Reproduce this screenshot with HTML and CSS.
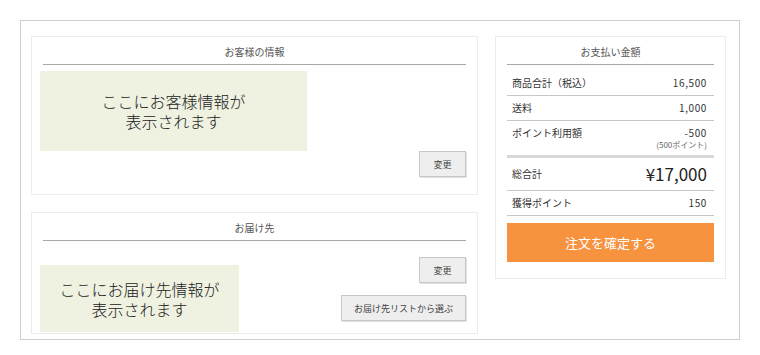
FILE: index.html
```html
<!DOCTYPE html>
<html lang="ja">
<head>
    <meta charset="UTF-8">
    <title>ご注文内容の確認</title>
    <link rel="stylesheet" href="styles.css">
</head>
<body>

    <div class="frame">
        <!-- 左側 -->
        <div class="left-col">
            <div class="card card-customer">
                <div class="card-title">お客様の情報</div>
                <div class="placeholder placeholder-customer">ここにお客様情報が<br>表示されます</div>
                <div class="btn-row">
                    <button class="btn btn-small">変更</button>
                </div>
            </div>

            <div class="card card-delivery">
                <div class="card-title">お届け先</div>
                <div class="delivery-body">
                    <div class="placeholder placeholder-delivery">ここにお届け先情報が<br>表示されます</div>
                    <div class="delivery-btns">
                        <button class="btn btn-small">変更</button>
                        <button class="btn btn-list">お届け先リストから選ぶ</button>
                    </div>
                </div>
            </div>
        </div>

        <!-- 右側 -->
        <div class="card card-payment">
            <div class="card-title">お支払い金額</div>
            <div class="pay-row first">
                <span>商品合計（税込）</span>
                <span class="num">16,500</span>
            </div>
            <div class="pay-row">
                <span>送料</span>
                <span class="num">1,000</span>
            </div>
            <div class="pay-row points">
                <span>ポイント利用額</span>
                <span class="num-wrap">
                    <span class="num">-500</span>
                    <span class="sub">(500ポイント)</span>
                </span>
            </div>
            <div class="pay-row total">
                <span>総合計</span>
                <span class="total-num">¥17,000</span>
            </div>
            <div class="pay-row">
                <span>獲得ポイント</span>
                <span class="num">150</span>
            </div>
            <button class="btn-order">注文を確定する</button>
        </div>
    </div>

</body>
</html>
```

FILE: styles.css
```css
body {
    margin: 0;
    padding: 0;
    background-color: #fff;
    color: #333;
    font-family: "Noto Sans CJK JP", "Noto Sans", sans-serif;
}

.frame {
    box-sizing: border-box;
    width: 720px;
    height: 320px;
    margin: 20px 0 0 20px;
    padding: 15px 10px;
    border: 1px solid #cfcfcf;
    display: flex;
    gap: 17px;
    align-items: flex-start;
}

.left-col {
    width: 447px;
    display: flex;
    flex-direction: column;
    gap: 17px;
}

.card {
    box-sizing: border-box;
    border: 1px solid #ececec;
    padding: 0 11px;
}

.card-title {
    font-size: 10px;
    line-height: 12px;
    color: #555;
    text-align: center;
    padding: 9px 0 6px;
    border-bottom: 1px solid #a8a8a8;
}

/* 仮の表示エリア */
.placeholder {
    background-color: #eff2e1;
    font-size: 16px;
    line-height: 20px;
    font-weight: 300;
    color: #222;
    text-align: center;
    display: flex;
    align-items: center;
    justify-content: center;
    margin-left: -3px;
}

.placeholder-customer {
    width: 267px;
    height: 80px;
    margin-top: 6px;
}

.placeholder-delivery {
    width: 199px;
    height: 67px;
    margin-top: 24px;
}

.card-customer {
    padding-bottom: 17px;
}

.btn-row {
    display: flex;
    justify-content: flex-end;
}

.btn {
    font-family: inherit;
    font-size: 9px;
    color: #444;
    background-color: #eeeeee;
    border: 1px solid #c8c8c8;
    box-shadow: 1px 1px 0 #e0e0e0;
    padding: 0;
    cursor: pointer;
}

.btn-small {
    width: 47px;
    height: 26px;
}

.btn-list {
    width: 125px;
    height: 26px;
}

.card-delivery {
    padding-bottom: 1px;
}

.delivery-body {
    display: flex;
    justify-content: space-between;
    align-items: flex-start;
}

.delivery-btns {
    display: flex;
    flex-direction: column;
    align-items: flex-end;
    gap: 12px;
    margin-top: 16px;
}

/* お支払い金額 */
.card-payment {
    width: 231px;
    padding-bottom: 16px;
}

.pay-row {
    display: flex;
    justify-content: space-between;
    align-items: center;
    font-size: 10px;
    line-height: 12px;
    padding: 6px 7px 6px 5px;
    border-bottom: 1px solid #c8c8c8;
}

.pay-row.first {
    margin-top: 6px;
}

.num {
    letter-spacing: 0.6px;
}

.points {
    align-items: flex-start;
    padding-bottom: 5px;
    border-bottom: 3px solid #d8d8d8;
}

.num-wrap {
    display: flex;
    flex-direction: column;
    align-items: flex-end;
}

.sub {
    font-size: 8px;
    line-height: 11px;
    color: #666;
}

.total {
    padding-top: 6px;
    padding-bottom: 6px;
}

.total-num {
    font-size: 17px;
    line-height: 20px;
    color: #222;
}

.btn-order {
    display: block;
    width: 100%;
    height: 39px;
    margin-top: 7px;
    background-color: #f7923f;
    color: #fff;
    border: none;
    font-family: inherit;
    font-size: 13px;
    cursor: pointer;
}
```
